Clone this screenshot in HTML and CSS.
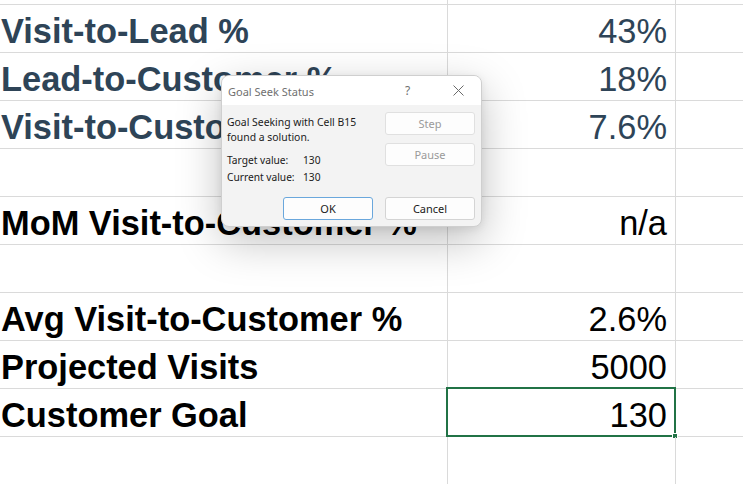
FILE: index.html
```html
<!DOCTYPE html>
<html>
<head>
<meta charset="utf-8">
<link rel="stylesheet" href="styles.css">
</head>
<body>
<div class="sheet">
  <div class="row top"><div class="cell a"></div><div class="cell b"></div><div class="cell c"></div></div>
  <div class="row slate"><div class="cell a">Visit-to-Lead %</div><div class="cell b">43%</div><div class="cell c"></div></div>
  <div class="row slate"><div class="cell a">Lead-to-Customer %</div><div class="cell b">18%</div><div class="cell c"></div></div>
  <div class="row slate"><div class="cell a">Visit-to-Customer %</div><div class="cell b">7.6%</div><div class="cell c"></div></div>
  <div class="row"><div class="cell a"></div><div class="cell b"></div><div class="cell c"></div></div>
  <div class="row"><div class="cell a">MoM Visit-to-Customer %</div><div class="cell b">n/a</div><div class="cell c"></div></div>
  <div class="row"><div class="cell a"></div><div class="cell b"></div><div class="cell c"></div></div>
  <div class="row"><div class="cell a">Avg Visit-to-Customer %</div><div class="cell b">2.6%</div><div class="cell c"></div></div>
  <div class="row"><div class="cell a">Projected Visits</div><div class="cell b">5000</div><div class="cell c"></div></div>
  <div class="row"><div class="cell a">Customer Goal</div><div class="cell b selected">130<span class="handle"></span></div><div class="cell c"></div></div>
  <div class="row"><div class="cell a"></div><div class="cell b"></div><div class="cell c"></div></div>
</div>

<div class="dialog">
  <div class="titlebar">
    <span class="title">Goal Seek Status</span>
    <span class="help">?</span>
    <svg class="close" width="11" height="11" viewBox="0 0 11 11"><path d="M0.5 0.5 L10.5 10.5 M10.5 0.5 L0.5 10.5" stroke="#6a6a6a" stroke-width="1" fill="none"/></svg>
  </div>
  <div class="dbody">
    <div class="upper">
      <div class="info">
        <div class="msg">Goal Seeking with Cell B15<br>found a solution.</div>
        <div class="vals">
          <span class="lbl">Target value:</span><span>130</span>
          <span class="lbl">Current value:</span><span>130</span>
        </div>
      </div>
      <div class="side">
        <button class="btn disabled">Step</button>
        <button class="btn disabled">Pause</button>
      </div>
    </div>
    <div class="lower">
      <button class="btn default">OK</button>
      <button class="btn">Cancel</button>
    </div>
  </div>
</div>
</body>
</html>
```

FILE: styles.css
```css
* { box-sizing: border-box; }
html, body { margin: 0; padding: 0; background: #fff; overflow: hidden; }
body { width: 743px; height: 484px; position: relative; }

.sheet { display: flex; flex-direction: column; font-family: "Liberation Sans", Arial, sans-serif; font-size: 34.4px; color: #000; }
.row { display: grid; grid-template-columns: 448px 228px 1fr; height: 48px; }
.row.top { height: 5px; }
.cell { border-bottom: 1px solid #dadada; border-right: 1px solid #dadada; padding-top: 5px; line-height: 42px; white-space: nowrap; }
.cell.a { font-weight: bold; padding-left: 1px; overflow: visible; border-right: 1px solid #dadada; }
.cell.b { text-align: right; padding-right: 8px; position: relative; }
.cell.c { border-right: none; }
.row.top .cell { padding-top: 0; }
.row.slate { color: #2e4457; }

.selected::before { content: ""; position: absolute; top: -2px; left: -2px; right: -1px; bottom: -1px; border: 2px solid #217346; }
.handle { position: absolute; right: -3px; bottom: -3px; width: 6px; height: 6px; background: #217346; border: 1px solid #fff; }

.dialog { position: absolute; left: 221px; top: 75px; width: 261px; height: 152px; border: 1px solid #cfcfcf; border-radius: 8px; background: #f3f3f3; overflow: hidden; box-shadow: 0 14px 44px rgba(0,0,0,0.25), 0 2px 8px rgba(0,0,0,0.08); font-family: "Noto Sans", "Open Sans", sans-serif; display: flex; flex-direction: column; }
.titlebar { height: 29px; background: #fff; display: flex; align-items: center; padding-left: 6px; }
.title { font-size: 11px; color: #707070; flex: 1; padding-top: 1px; }
.help { font-size: 12px; color: #707070; width: 12px; margin-right: 36px; }
.close { margin-right: 17px; }
.dbody { flex: 1; padding: 7px 6px 6px 5px; display: flex; flex-direction: column; }
.upper { display: flex; justify-content: space-between; }
.info { font-size: 10.4px; color: #1a1a1a; padding-top: 3px; }
.msg { line-height: 15px; }
.vals { display: grid; grid-template-columns: 76px auto; line-height: 17px; margin-top: 7px; font-size: 10.2px; }
.side { display: flex; flex-direction: column; gap: 8px; }
.btn { width: 90px; height: 23px; border: 1px solid #d4d4d4; border-radius: 3px; background: #fdfdfd; font-family: "Noto Sans", "Open Sans", sans-serif; font-size: 11px; color: #1a1a1a; padding: 0; }
.btn.disabled { color: #9a9a9a; border-color: #e0e0e0; }
.btn.default { border-color: #6aa7dc; }
.lower { margin-top: auto; display: flex; justify-content: flex-end; gap: 12px; }
```
